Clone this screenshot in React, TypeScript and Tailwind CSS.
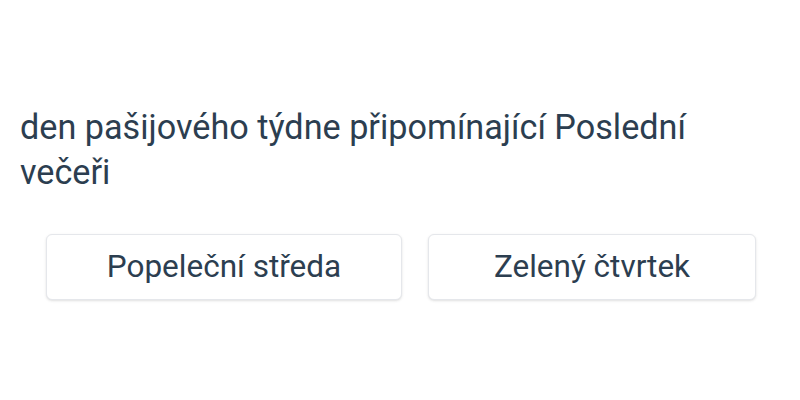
export default function App() {
  return (
    <div
      className="w-[800px] h-[400px] bg-white text-[#2c3e50]"
      style={{ fontFamily: "Roboto, 'Noto Sans', sans-serif" }}
    >
      <div className="pt-[105px] px-5">
        <p className="text-[34.2px] leading-[45px] max-w-[700px]">
          den pašijového týdne připomínající Poslední večeři
        </p>
      </div>
      <div className="flex gap-[26px] pl-[46px] pt-[39px]">
        <button className="w-[356px] h-[66px] bg-white border border-[#e5e7eb] rounded-md shadow-sm text-[31.5px] text-[#2c3e50]">
          Popeleční středa
        </button>
        <button className="w-[328px] h-[66px] bg-white border border-[#e5e7eb] rounded-md shadow-sm text-[31.5px] text-[#2c3e50]">
          Zelený čtvrtek
        </button>
      </div>
    </div>
  );
}
